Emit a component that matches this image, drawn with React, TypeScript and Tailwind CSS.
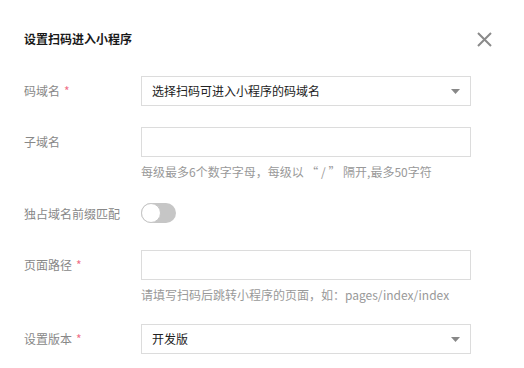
import React, { useState } from "react";

const font = { fontFamily: '"Noto Sans CJK SC", "Noto Sans", sans-serif' };

const Label = ({ text, required }: { text: string; required?: boolean }) => (
  <div className="flex w-[117px] shrink-0 items-center text-[12px] text-[#888]">
    {text}
    {required && <span className="ml-[4px] text-[12px] text-[#f0708a]">*</span>}
  </div>
);

const Arrow = () => (
  <svg width="9" height="5" viewBox="0 0 9 5" className="absolute right-[10px] top-[12px]">
    <path d="M0 0h9L4.5 5z" fill="#888" />
  </svg>
);

const App = () => {
  const [exclusive, setExclusive] = useState(false);

  return (
    <div className="h-[368px] w-[524px] bg-white pl-[24px]" style={font}>
      <div className="flex items-center justify-between pr-[32px] pt-[29px]">
        <h1 className="text-[12px] font-bold leading-[20px] text-[#1a1a1a]">设置扫码进入小程序</h1>
        <button className="flex h-[16px] w-[16px] items-center justify-center">
          <svg width="15" height="15" viewBox="0 0 15 15">
            <path d="M1 1l13 13M14 1L1 14" stroke="#8a8a8a" strokeWidth="2" />
          </svg>
        </button>
      </div>

      {/* 码域名 */}
      <div className="mt-[27px] flex h-[30px] items-stretch">
        <Label text="码域名" required />
        <div className="relative flex w-[330px] items-center border border-[#dcdcdc] pl-[10px] text-[12px] text-[#222]">
          选择扫码可进入小程序的码域名
          <Arrow />
        </div>
      </div>

      {/* 子域名 */}
      <div className="mt-[21px] flex h-[30px] items-stretch">
        <Label text="子域名" />
        <input className="w-[330px] border border-[#dcdcdc] px-[10px] text-[12px] outline-none" />
      </div>
      <div className="ml-[117px] mt-[5px] text-[12px] leading-[20px] text-[#999]">
        每级最多6个数字字母，每级以 “ / ” 隔开,最多50字符
      </div>

      {/* 独占域名前缀匹配 */}
      <div className="mt-[17px] flex h-[30px] items-center">
        <Label text="独占域名前缀匹配" />
        <button
          onClick={() => setExclusive(!exclusive)}
          className={`relative mt-[-3px] h-[20px] w-[35px] rounded-full ${exclusive ? "bg-[#1aad19]" : "bg-[#c6c6c6]"}`}
        >
          <span
            className={`absolute top-0 h-[20px] w-[20px] rounded-full border border-[#c6c6c6] bg-white ${exclusive ? "left-[15px]" : "left-0"}`}
          />
        </button>
      </div>

      {/* 页面路径 */}
      <div className="mt-[21px] flex h-[30px] items-stretch">
        <Label text="页面路径" required />
        <input className="w-[330px] border border-[#dcdcdc] px-[10px] text-[12px] outline-none" />
      </div>
      <div className="ml-[117px] mt-[5px] text-[12px] leading-[20px] text-[#999]">
        请填写扫码后跳转小程序的页面，如：pages/index/index
      </div>

      {/* 设置版本 */}
      <div className="mt-[19px] flex h-[30px] items-stretch">
        <Label text="设置版本" required />
        <div className="relative flex w-[330px] items-center border border-[#dcdcdc] pl-[10px] text-[12px] text-[#222]">
          开发版
          <Arrow />
        </div>
      </div>
    </div>
  );
};

export default App;
